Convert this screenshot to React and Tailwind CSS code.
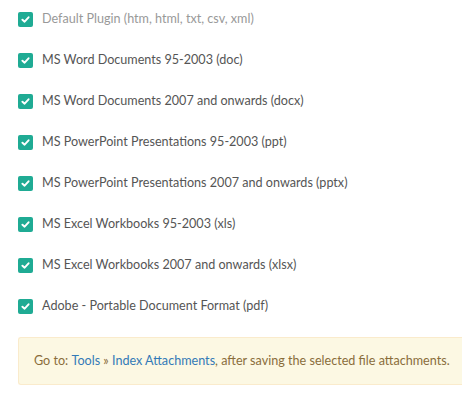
const items = [
  { label: 'Default Plugin (htm, html, txt, csv, xml)', disabled: true },
  { label: 'MS Word Documents 95-2003 (doc)' },
  { label: 'MS Word Documents 2007 and onwards (docx)' },
  { label: 'MS PowerPoint Presentations 95-2003 (ppt)' },
  { label: 'MS PowerPoint Presentations 2007 and onwards (pptx)' },
  { label: 'MS Excel Workbooks 95-2003 (xls)' },
  { label: 'MS Excel Workbooks 2007 and onwards (xlsx)' },
  { label: 'Adobe - Portable Document Format (pdf)' },
];

function Check() {
  return (
    <span className="w-[15px] h-[15px] rounded-[2px] bg-[#1fab94] flex items-center justify-center shrink-0">
      <svg width="9" height="7" viewBox="0 0 10 8" fill="none">
        <path d="M1.5 4.2 L4 6.5 L8.5 1.5" stroke="white" strokeWidth="2.2" strokeLinecap="round" strokeLinejoin="round" />
      </svg>
    </span>
  );
}

export default function App() {
  return (
    <div className="w-[462px] h-[401px] bg-white pl-[18px] pt-[12px] overflow-hidden" style={{ fontFamily: 'Lato, "Noto Sans", sans-serif' }}>
      <div className="flex flex-col gap-[26px]">
        {items.map((it, i) => (
          <label key={i} className="flex items-center gap-[9px] h-[15px]">
            <Check />
            <span className={`text-[12.6px] leading-none whitespace-nowrap ${it.disabled ? 'text-[#999]' : 'text-[#555]'}`}>{it.label}</span>
          </label>
        ))}
      </div>
      <div className="mt-[23px] h-[48px] bg-[#fcf8e3] border border-[#faebcc] border-r-0 rounded-l-[3px] flex items-center pl-[15px] text-[12.6px] text-[#8a6d3b] whitespace-nowrap">
        Go to:&nbsp;<a className="text-[#337ab7]">Tools</a>&nbsp;»&nbsp;<a className="text-[#337ab7]">Index Attachments</a>, after saving the selected file attachments.
      </div>
    </div>
  );
}
